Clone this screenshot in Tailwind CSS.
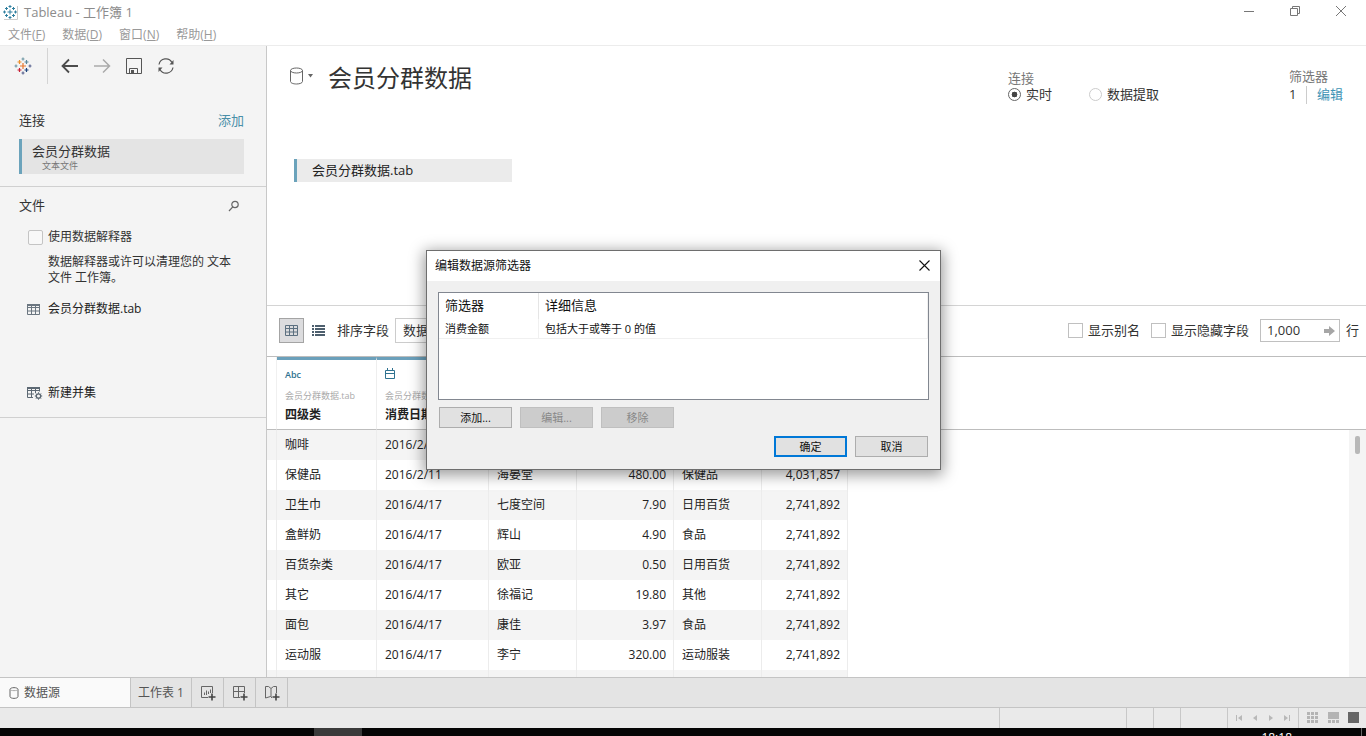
<!DOCTYPE html>
<html lang="zh-CN">
<head>
<meta charset="utf-8">
<title>Tableau - 工作簿 1</title>
<script src="https://cdn.jsdelivr.net/npm/@tailwindcss/browser@4"></script>
</head>
<body class="relative flex h-screen flex-col overflow-hidden bg-white font-['Open_Sans','Noto_Sans_CJK_SC',sans-serif] text-xs text-[#333]">

<!-- Title bar -->
<header class="flex h-[23px] shrink-0 items-center pl-0.5 text-[#8c8c8c]">
  <svg class="size-4" viewBox="0 0 16 16" fill="none" stroke="#2f7f9f" stroke-width="1"><path d="M5.5 8h5M8 5.500v5M8 1v3M6.500 2.500h3M8 12v3M6.500 13.500h3M1 8h3M2.500 6.500v3M12 8h3M13.500 6.500v3M3 4.500h3M4.500 3v3M10 4.500h3M11.500 3v3M3 11.500h3M4.500 10v3M10 11.500h3M11.500 10v3"/><path d="M15.500 2v13.500H2" stroke="#ccc"/></svg>
  <h1 class="ml-1.5 flex-1 text-[13px] leading-4">Tableau - 工作簿 1</h1>
  <div class="flex pr-[19px] pb-0.5">
    <button aria-label="最小化" class="mr-[34px]"><svg class="size-3" viewBox="0 0 12 12" fill="none" stroke="#777"><path d="M1 6.500h10"/></svg></button>
    <button aria-label="还原" class="mr-[34px]"><svg class="size-3" viewBox="0 0 12 12" fill="none" stroke="#777"><path d="M1.500 3.500h7v7h-7zM3.500 3.500v-2h7v7h-2"/></svg></button>
    <button aria-label="关闭"><svg class="size-3" viewBox="0 0 12 12" fill="none" stroke="#777"><path d="M1 1l10 10M11 1L1 11"/></svg></button>
  </div>
</header>

<nav class="flex h-[23px] shrink-0 items-center gap-[17px] border-b border-[#ececec] px-2 pt-0.5 text-[#999]">
  <button>文件(<u>F</u>)</button>
  <button>数据(<u>D</u>)</button>
  <button>窗口(<u>N</u>)</button>
  <button>帮助(<u>H</u>)</button>
</nav>

<div class="flex min-h-0 flex-1">
  <!-- Sidebar -->
  <aside class="w-[267px] shrink-0 border-r border-[#c8c8c8] bg-[#f4f4f4]">
    <div class="flex h-10 items-center pl-3.5">
      <button aria-label="开始页面"><svg class="size-[18px]" viewBox="0 0 18 18" fill="none" stroke-width="1.200"><path d="M6 9h6M9 6v6" stroke="#e8762c"/><path d="M3.500 5h4M5.500 3v4" stroke="#eb912c"/><path d="M10.500 5h4M12.500 3v4" stroke="#59879b"/><path d="M3.500 13h4M5.500 11v4" stroke="#c72035"/><path d="M10.500 13h4M12.500 11v4" stroke="#1f457e"/><path d="M7.500 2h3M9 .5v3M0.500 9h3M2 7.500v3" stroke="#7099a6"/><path d="M7.500 16h3M9 14.500v3M14.500 9h3M16 7.500v3" stroke="#5b6591"/></svg></button>
      <span class="ml-[15px] h-9 w-px bg-[#d4d4d4]"></span>
      <button aria-label="后退" class="ml-3"><svg class="size-5" viewBox="0 0 20 20" fill="none" stroke="#4c4c4c" stroke-width="1.800"><path d="M2.500 10H18M9 3.500L2.500 10 9 16.500"/></svg></button>
      <button aria-label="前进" class="ml-3"><svg class="size-5" viewBox="0 0 20 20" fill="none" stroke="#aaa" stroke-width="1.500"><path d="M2 10h15.500M11 3.500l6.500 6.500-6.500 6.500"/></svg></button>
      <button aria-label="保存" class="ml-3"><svg class="size-5" viewBox="0 0 20 20" fill="none" stroke="#555"><path d="M2.500 2.500h15v15h-15zM5.500 17.500v-5h8v5"/><path d="M7 14h3v3.500H7z" fill="#555" stroke="none"/></svg></button>
      <button aria-label="刷新" class="ml-3"><svg class="size-5" viewBox="0 0 20 20" fill="none" stroke="#555" stroke-width="1.200"><path d="M3 8.500A7 7 0 0 1 16 6.500M17 11.500A7 7 0 0 1 4 13.500"/><path d="M17.500 4v4.500h-4zM2.500 16v-4.500h4z" fill="#555" stroke="none"/></svg></button>
    </div>

    <section class="border-b border-[#d0d0d0] pt-6 pr-[22px] pb-3 pl-[19px]">
      <div class="flex h-5 items-center justify-between text-[13px] leading-5">
        <h2>连接</h2><a href="#" class="text-[#4a8fa8]">添加</a>
      </div>
      <button class="mt-[9px] flex h-[35px] w-full flex-col border-l-3 border-[#6ba3bb] bg-[#e4e4e4] pt-0.5 pl-2.5 text-left">
        <span class="text-[13px] leading-5">会员分群数据</span>
        <span class="pl-2.5 text-[9px] leading-[10px] text-[#777]">文本文件</span>
      </button>
    </section>

    <section class="h-[231px] border-b border-[#d0d0d0] pt-[9px] pr-5 pl-[19px]">
      <div class="flex h-5 items-center justify-between pr-1.5 text-[13px]">
        <h2>文件</h2>
        <button aria-label="搜索"><svg class="size-3" viewBox="0 0 12 12" fill="none" stroke="#666" stroke-width="1.200"><circle cx="7" cy="4.500" r="3.200"/><path d="M4.800 6.800L1 11"/></svg></button>
      </div>
      <label class="mt-[11px] flex h-5 items-center pl-[9px]">
        <input type="checkbox" class="size-[15px] appearance-none rounded-[2px] border border-[#c4c4c4] bg-[#f8f8f8]"><span class="ml-[5px]">使用数据解释器</span>
      </label>
      <p class="mt-[7px] pr-3 pl-[29px] leading-4">数据解释器或许可以清理您的 文本文件 工作簿。</p>
      <button class="mt-[13px] flex h-5 items-center pl-2 text-[#222]">
        <svg class="size-[13px]" viewBox="0 0 13 13" fill="none" stroke="#6b7680"><path d="M.5 1.500h12v10H.5zM.5 4.500h12M.5 8h12M4.500 2v9.500M8.500 2v9.500"/><path d="M0 1h13v2H0z" fill="#6b7680" stroke="none"/></svg>
        <span class="ml-2">会员分群数据.tab</span>
      </button>
      <button class="mt-16 flex h-5 items-center pl-2 text-[#222]">
        <svg class="h-[14px] w-4" viewBox="0 0 16 14" fill="none" stroke="#5c6873"><path d="M6 11.500H.5v-10h12v4M.5 4.500h12M.5 8H7M4.500 2v9.500M8.500 2v5"/><path d="M0 1h13v2H0z" fill="#5c6873" stroke="none"/><circle cx="11.500" cy="10" r="2.200" stroke-width="1.300"/><path d="M11.500 6.300v1.500M11.500 12.200v1.500M7.800 10h1.500M13.700 10h1.500M9 7.500l1 1M13 11.500l1 1M14 7.500l-1 1M10 11.500l-1 1"/></svg>
        <span class="ml-[5px]">新建并集</span>
      </button>
    </section>
  </aside>

  <!-- Data source page -->
  <main class="flex min-w-0 flex-1 flex-col">
    <section class="h-[260px] shrink-0 border-b border-[#d4d4d4]">
      <div class="flex items-start pt-4 pr-[23px] pl-[22px]">
        <button aria-label="数据源类型" class="mt-1 flex items-center gap-1 pt-px">
          <svg class="h-[18px] w-[15px]" viewBox="0 0 15 18" fill="none" stroke="#666"><ellipse cx="7.500" cy="3.500" rx="6" ry="2.500"/><path d="M1.500 3.500v11c0 1.400 2.700 2.500 6 2.500s6-1.100 6-2.500v-11"/></svg>
          <svg class="h-1 w-[5px]" viewBox="0 0 5 4" fill="#666"><path d="M0 0h5L2.500 3.500z"/></svg>
        </button>
        <h2 class="ml-[15px] text-2xl leading-8">会员分群数据</h2>
        <fieldset class="mt-2 ml-auto text-[13px]">
          <legend class="h-4 leading-4 text-[#777]">连接</legend>
          <div class="flex h-[18px] items-center">
            <label class="flex items-center"><input type="radio" name="mode" checked class="size-[13px] appearance-none rounded-full border border-[#666] bg-white bg-radial from-[#444] from-35% to-transparent to-40%"><span class="ml-[5px]">实时</span></label>
            <label class="ml-[37px] flex items-center"><input type="radio" name="mode" class="size-[13px] appearance-none rounded-full border border-[#ccc]"><span class="ml-[5px]">数据提取</span></label>
          </div>
        </fieldset>
        <div class="mt-1.5 ml-[130px] text-[13px]">
          <h3 class="h-4 leading-4 text-[#777]">筛选器</h3>
          <div class="flex h-[22px] items-center"><span class="w-[17px]">1</span><span class="h-[18px] w-px bg-[#ccc]"></span><a href="#" class="ml-2.5 text-[#3e93b5]">编辑</a></div>
        </div>
      </div>
      <button class="mt-[53px] ml-[27px] block h-[23px] w-[218px] border-l-3 border-[#6ba3bb] bg-[#ebebeb] pl-[15px] text-left text-[13px] leading-[23px] text-[#222]">会员分群数据.tab</button>
    </section>

    <div class="flex h-[51px] shrink-0 items-center border-b border-[#bdbdbd] px-3 pr-[7px] pb-px text-[13px]">
      <button aria-label="网格视图" class="flex size-[25px] items-center justify-center border border-[#a4a4a4] bg-[#dcdcde]"><svg class="size-[13px]" viewBox="0 0 13 13" fill="none" stroke="#5c7080"><path d="M.5 1.500h12v10H.5zM.5 4.500h12M.5 8h12M4.500 2v9.500M8.500 2v9.500"/></svg></button>
      <button aria-label="列表视图" class="ml-2"><svg class="size-[13px]" viewBox="0 0 13 13" fill="#4d5f6e"><path d="M0 1h2v2H0zM3 1h10v2H3zM0 4h2v2H0zM3 4h10v2H3zM0 7h2v2H0zM3 7h10v2H3zM0 10h2v2H0zM3 10h10v2H3z"/></svg></button>
      <label for="sort" class="ml-3">排序字段</label>
      <select id="sort" class="ml-1.5 h-[25px] w-36 appearance-none border border-[#ccc] bg-white pl-[7px]"><option>数据源顺序</option></select>
      <label class="ml-auto flex items-center"><input type="checkbox" class="size-[15px] appearance-none border border-[#c0c0c0] bg-white"><span class="ml-[5px]">显示别名</span></label>
      <label class="ml-[11px] flex items-center"><input type="checkbox" class="size-[15px] appearance-none border border-[#c0c0c0] bg-white"><span class="ml-[5px]">显示隐藏字段</span></label>
      <div class="ml-[11px] flex h-[23px] w-20 items-center border border-[#c0c0c0] pr-1">
        <input id="rows" type="text" value="1,000" class="min-w-0 flex-1 pl-1.5 text-[13px] outline-none">
        <button aria-label="应用"><svg class="h-2.5 w-[11px]" viewBox="0 0 11 10" fill="#a6a6a6"><path d="M0 3h5V0l6 5-6 5V7H0z"/></svg></button>
      </div>
      <label for="rows" class="ml-1.5">行</label>
    </div>

    <div class="min-h-0 flex-1 overflow-hidden">
      <table class="w-full table-fixed border-separate border-spacing-0 text-[#222]">
        <colgroup><col class="w-[10px]"><col class="w-[100px]"><col class="w-[112px]"><col class="w-[88px]"><col class="w-[97px]"><col class="w-[88px]"><col class="w-[86px]"><col><col class="w-[17px]"></colgroup>
        <thead>
          <tr class="h-[73px] text-left align-top *:border-b *:border-b-[#bdbdbd]">
            <td class="border-r border-r-[#f0f0f0]"></td>
            <th class="border-t-3 border-r border-t-[#6ba0bb] border-r-[#eee] pl-2">
              <span class="mt-1.5 block h-[18px] text-[9px] leading-[18px] font-semibold text-[#2f7290]">Abc</span>
              <span class="mt-1 block h-4 text-[9px] leading-4 font-normal text-[#aaa]">会员分群数据.tab</span>
              <span class="block h-[22px] leading-[22px]">四级类</span>
            </th>
            <th class="overflow-hidden border-t-3 border-r border-t-[#6ba0bb] border-r-[#eee] pl-2 whitespace-nowrap">
              <span class="mt-1.5 flex h-[18px] items-start pt-0.5"><svg class="h-[11px] w-[10px]" viewBox="0 0 10 11" fill="none" stroke="#2f7290"><path d="M.5 2.500h9v8h-9zM.5 5.500h9M2.500 0v2.500M7.500 0v2.500"/></svg></span>
              <span class="mt-1 block h-4 text-[9px] leading-4 font-normal text-[#aaa]">会员分群数据.tab</span>
              <span class="block h-[22px] leading-[22px]">消费日期</span>
            </th>
            <td class="border-t-3 border-t-[#6ba0bb]"></td><td class="border-t-3 border-t-[#6ba0bb]"></td><td class="border-t-3 border-t-[#6ba0bb]"></td><td class="border-t-3 border-t-[#6ba0bb]"></td><td></td><td></td>
          </tr>
        </thead>
        <tbody id="data"></tbody>
      </table>
    </div>
  </main>
</div>

<!-- Sheet tabs -->
<div class="flex h-[31px] shrink-0 border-t border-b border-[#c4c4c4] bg-[#e4e4e4] text-[#555]">
  <button class="flex w-[130px] items-center bg-[#fafafa] pl-[9px]"><svg class="h-3 w-2.5" viewBox="0 0 10 12" fill="none" stroke="#666"><path d="M1 2.500C1 0 9 0 9 2.500v7C9 12 1 12 1 9.500z"/><path d="M1 2.500C1 4 9 4 9 2.500" stroke="#aaa"/></svg><span class="ml-[5px]">数据源</span></button>
  <button class="w-[62px] border-x border-[#c4c4c4]">工作表 1</button>
  <button aria-label="新建工作表" class="flex w-8 items-center justify-center border-r border-[#c4c4c4]"><svg class="size-4" viewBox="0 0 16 16" fill="none" stroke="#666"><path d="M8 12.500H1.500v-11h11V8M4.500 10V7.500M6.500 10V5.500M8.500 9V6.500M10.500 8V4.500"/><path d="M12 8.500v7M8.500 12h7" stroke="#444" stroke-width="1.600"/></svg></button>
  <button aria-label="新建仪表板" class="flex w-8 items-center justify-center border-r border-[#c4c4c4]"><svg class="size-4" viewBox="0 0 16 16" fill="none" stroke="#666"><path d="M8 12.500H1.500v-11h11V8M1.500 6.500h11M6.500 1.500v11"/><path d="M12 8.500v7M8.500 12h7" stroke="#444" stroke-width="1.600"/></svg></button>
  <button aria-label="新建故事" class="flex w-8 items-center justify-center border-r border-[#c4c4c4]"><svg class="size-4" viewBox="0 0 16 16" fill="none" stroke="#666"><path d="M8 13l-1.500-1.500-5 1.500V1.500h3L7 3.500l2.500-2h3V8M7 3.500V12"/><path d="M12 8.500v7M8.500 12h7" stroke="#444" stroke-width="1.600"/></svg></button>
</div>

<!-- Status bar -->
<footer class="flex h-5 shrink-0 justify-end bg-[#eaeaea]">
  <span class="w-[127px] border-l border-[#c8c8c8]"></span>
  <span class="w-[27px] border-l border-[#c8c8c8]"></span>
  <span class="w-[27px] border-l border-[#c8c8c8]"></span>
  <span class="w-[47px] border-l border-[#c8c8c8]"></span>
  <div class="flex w-[71px] items-center justify-between border-l border-[#c8c8c8] px-[7px]">
    <button aria-label="第一页"><svg class="h-1.5 w-2" viewBox="0 0 8 6" fill="#b8b8b8"><path d="M1 0h1v6H1zM7 0v6L3 3z"/></svg></button>
    <button aria-label="上一页"><svg class="h-1.5 w-2" viewBox="0 0 8 6" fill="#b8b8b8"><path d="M6 0v6L2 3z"/></svg></button>
    <button aria-label="下一页"><svg class="h-1.5 w-2" viewBox="0 0 8 6" fill="#b8b8b8"><path d="M2 0v6l4-3z"/></svg></button>
    <button aria-label="最后一页"><svg class="h-1.5 w-2" viewBox="0 0 8 6" fill="#b8b8b8"><path d="M6 0h1v6H6zM1 0v6l4-3z"/></svg></button>
  </div>
  <div class="flex w-[68px] items-center justify-between border-l border-[#c8c8c8] pr-[7px] pb-px pl-2">
    <button aria-label="缩略图"><svg class="size-[11px]" viewBox="0 0 11 11" fill="#b4b4b4"><path d="M0 0h3v3H0zM4 0h3v3H4zM8 0h3v3H8zM0 4h3v3H0zM4 4h3v3H4zM8 4h3v3H8zM0 8h3v3H0zM4 8h3v3H4zM8 8h3v3H8z"/></svg></button>
    <button aria-label="幻灯片"><svg class="size-[11px]" viewBox="0 0 11 11" fill="#b4b4b4"><path d="M0 0h11v7H0zM0 8h3v3H0zM4 8h3v3H4zM8 8h3v3H8z"/></svg></button>
    <button aria-label="单页" class="size-[11px] bg-[#666]"></button>
  </div>
</footer>

<!-- Desktop taskbar -->
<div class="flex h-2 shrink-0 overflow-hidden bg-[#050505]">
  <span class="ml-[314px] w-12 bg-[#3a3a3a]"></span>
  <time class="mt-0.5 mr-[69px] ml-auto h-4 leading-4 text-white">18:18</time>
  <span class="mr-1 w-px bg-[#666]"></span>
</div>

<!-- Edit data source filters -->
<section role="dialog" aria-labelledby="dlg" class="absolute top-[250px] left-[426px] w-[515px] border border-[#6e6e6e] bg-[#f0f0f0] text-[#111] shadow-[0_3px_14px_2px_rgba(0,0,0,0.4)]">
  <div class="flex h-[30px] items-center justify-between bg-white pr-2.5 pl-2">
    <h2 id="dlg">编辑数据源筛选器</h2>
    <button aria-label="关闭对话框" class="pb-0.5"><svg class="size-[11px]" viewBox="0 0 11 11" fill="none" stroke="#111" stroke-width="1.100"><path d="M.5.500l10 10M10.500.500l-10 10"/></svg></button>
  </div>
  <div class="px-[11px] pt-[11px] pb-3">
    <div class="h-[108px] border border-[#828790] bg-white">
      <table class="w-full table-fixed border-separate border-spacing-0 text-left">
        <colgroup><col class="w-[100px]"><col></colgroup>
        <thead><tr class="h-[26px] text-[13px]"><th class="border-r border-[#e5e5e5] pl-1.5 font-normal">筛选器</th><th class="border-r border-[#f0f0f0] pl-1.5 font-normal">详细信息</th></tr></thead>
        <tbody><tr class="h-5 text-[11px] leading-4 *:border-r *:border-b *:border-[#f0f0f0]"><td class="pl-1.5">消费金额</td><td class="pl-1.5">包括大于或等于 0 的值</td></tr></tbody>
      </table>
    </div>
    <div class="mt-[7px] flex gap-2 pl-px text-[11px]">
      <button class="h-[21px] w-[73px] border border-[#adadad] bg-[#e1e1e1] pt-px">添加...</button>
      <button disabled class="h-[21px] w-[73px] border border-[#bfbfbf] bg-[#ccc] pt-px text-[#888]">编辑...</button>
      <button disabled class="h-[21px] w-[73px] border border-[#bfbfbf] bg-[#ccc] pt-px text-[#888]">移除</button>
    </div>
    <div class="mt-2 flex justify-end gap-2 pr-px text-[11px]">
      <button class="h-[21px] w-[73px] border-2 border-[#0078d7] bg-[#e1e1e1] pt-px">确定</button>
      <button class="h-[21px] w-[73px] border border-[#adadad] bg-[#e1e1e1] pt-px">取消</button>
    </div>
  </div>
</section>

<script>
const rows = [
  ["咖啡", "2016/2/11", "", "", "", ""],
  ["保健品", "2016/2/11", "海晏堂", "480.00", "保健品", "4,031,857"],
  ["卫生巾", "2016/4/17", "七度空间", "7.90", "日用百货", "2,741,892"],
  ["盒鲜奶", "2016/4/17", "辉山", "4.90", "食品", "2,741,892"],
  ["百货杂类", "2016/4/17", "欧亚", "0.50", "日用百货", "2,741,892"],
  ["其它", "2016/4/17", "徐福记", "19.80", "其他", "2,741,892"],
  ["面包", "2016/4/17", "康佳", "3.97", "食品", "2,741,892"],
  ["运动服", "2016/4/17", "李宁", "320.00", "运动服装", "2,741,892"],
  ["", "", "", "", "", ""]
];
document.getElementById("data").innerHTML = rows.map((r, i) => {
  const bg = i % 2 ? "" : "bg-[#f4f4f4]";
  return `<tr class="h-[30px]"><td class="border-r border-[#ececec] ${bg}"></td>` +
    r.map((c, k) => `<td class="border-r border-[#ececec] ${bg} ${k === 3 || k === 5 ? "pr-[7px] text-right" : "pl-2"}">${c}</td>`).join("") +
    `<td></td>` + (i ? "" : `<td rowspan="9" class="bg-[#f4f4f4] pt-1.5 pl-1.5 align-top"><div class="h-[18px] w-[5px] rounded-xs bg-[#b8b8b8]"></div></td>`) + `</tr>`;
}).join("");
</script>
</body>
</html>
